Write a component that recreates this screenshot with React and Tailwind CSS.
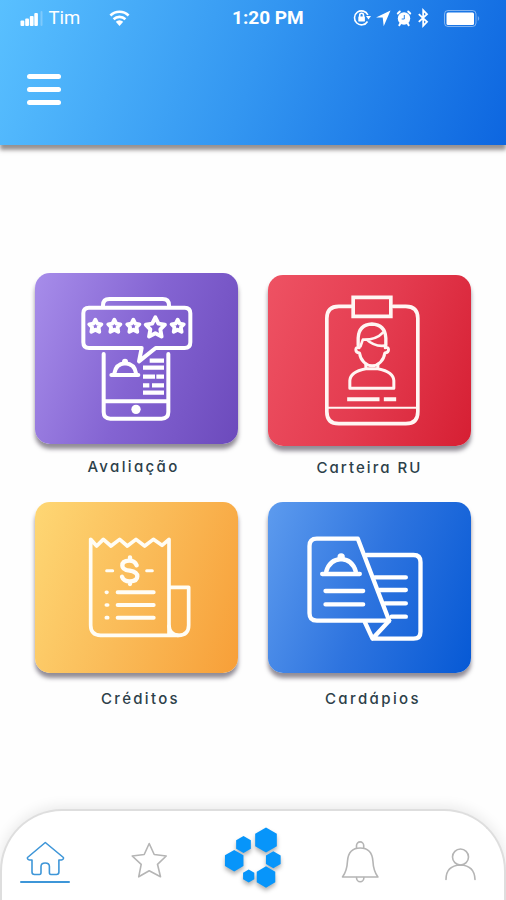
import React from "react";

/* ---------- Status bar ---------- */
const StatusBar = () => (
    <div className="relative h-9 text-white">
        <svg className="absolute inset-0 h-9 w-[506px]" viewBox="0 0 506 36" fill="currentColor">
            {/* Signal */}
            <rect x="20.5" y="20.5" width="3.8" height="5.5" rx="1" />
            <rect x="25.2" y="18.5" width="3.8" height="7.5" rx="1" />
            <rect x="29.8" y="16" width="3.8" height="10" rx="1" />
            <rect x="34.3" y="13" width="3.6" height="13" rx="1" />
            <rect x="40.5" y="11" width="2" height="15" rx="1" opacity="0.25" />
            {/* Wi-Fi */}
            <g fill="none" stroke="currentColor" strokeWidth="2.6">
                <path d="M110.4 15.5a13 13 0 0 1 18.2 0" />
                <path d="M113.6 19.3a8.4 8.4 0 0 1 11.8 0" />
            </g>
            <path d="M115.8 21.8a5.2 5.2 0 0 1 7.4 0L119.5 26z" />
            {/* Rotation lock */}
            <g fill="none" stroke="currentColor" strokeWidth="1.6">
                <path d="M367.5 21.5a7 7 0 1 1 0.4-6.5" />
                <path d="M359.7 17v-1.8a1.9 1.9 0 0 1 3.8 0V17" />
            </g>
            <rect x="358.3" y="16.5" width="6.6" height="5" rx="0.6" />
            <path d="M366 16h5l-2.5 3.6z" />
            {/* Location */}
            <path d="M390.5 10.5L376 17.4h6.7l1 8.9z" />
            {/* Alarm */}
            <circle cx="404" cy="18.5" r="6.2" />
            <path d="M397.8 13.5l2-2M410.2 13.5l-2-2M400.3 23.5l-1 1.7M407.700 23.500l1 1.700" stroke="currentColor" strokeWidth="2" strokeLinecap="round" />
            <path d="M404.300 15v4h-2.600" fill="none" stroke="#2582ea" strokeWidth="1" />
            {/* Bluetooth */}
            <path d="M418.800 14.200l8.200 7.600-3.800 4V10.300l3.800 3.900-8.200 7.600" fill="none" stroke="currentColor" strokeWidth="1.800" />
            {/* Battery */}
            <rect x="444.500" y="10.500" width="31.500" height="16" rx="3.500" fill="none" stroke="currentColor" opacity="0.450" />
            <rect x="446.500" y="12.500" width="27.500" height="12.500" rx="1.500" />
            <path d="M477.800 16v5a3 3 0 0 0 0-5z" opacity="0.400" />
        </svg>
        <span className="absolute left-[48.500px] top-[6px] font-[Roboto] text-[18.500px] leading-6">Tim</span>
        <span className="absolute left-[232px] top-[6px] whitespace-nowrap font-[Roboto] text-[19px] font-bold leading-6">
            1:20 PM
        </span>
    </div>
);

/* ---------- Card icons ---------- */
const STAR = "M0 -24L7.5 -9 23 -6.5 12 5 15 22 0 14 -15 22 -12 5 -23 -6.5 -7.5 -9z";

const ReviewIcon = () => (
    <svg className="h-full w-full" viewBox="30 39 609 513" fill="none" stroke="white" strokeWidth="12" strokeLinejoin="round" strokeLinecap="round">
        <path d="M234 140v-4q0-19 19-19h160q19 0 19 19v4" />
        <path d="M350 264H192q-17 0-17-17V160q0-17 17-17h287q17 0 17 17v87q0 17-17 17H392L342 304z" />
        <path d="M236 282v174q0 20 20 20h154q20 0 20-20V282M238 424h190" />
        <circle cx="333" cy="448" r="14" fill="white" stroke="none" />
        <g strokeWidth="14">
            <path d={STAR} transform="translate(211 198) scale(0.8)" />
            <path d={STAR} transform="translate(268 198) scale(0.8)" />
            <path d={STAR} transform="translate(325 198) scale(0.8)" />
            <path d={STAR} transform="translate(391 202) scale(1.25)" strokeWidth="9.5" />
            <path d={STAR} transform="translate(458 198) scale(0.8)" />
        </g>
        <path d="M259 345h81M268 340q5-28 32-30 29 2 33 30" />
        <circle cx="300" cy="305" r="9" fill="white" stroke="none" />
        <path strokeLinecap="butt" strokeWidth="13" d="M374 302h43M354 323h63M354 350h36M394 350h23M354 376h19M381 376h36M354 398h63" />
    </svg>
);

const BadgeIcon = () => (
    <svg className="h-full w-full" viewBox="33 44 606 513" fill="none" stroke="#fff6f3" strokeWidth="10" strokeLinejoin="round" strokeLinecap="round">
        <path strokeLinejoin="miter" strokeWidth="11" d="M287 111h113v57H287z" />
        <path strokeWidth="11" d="M282 138h-38q-36 0-36 36v280q0 36 36 36h201q36 0 36-36V174q0-36-36-36h-38" />
        <path d="M212 442h266" strokeWidth="6" />
        <path d="M302 255v-22q2-40 41-42 40 2 42 42v22" />
        <path d="M305 262q-10-2-10 6 0 8 11 10c3 23 20 38 38 38s35-15 38-38q11-2 11-10 0-8-10-6" strokeWidth="9" />
        <path d="M309 258l7-20h12c14 14 34 20 54 18M320 238c25 0 45-9 57-22" strokeWidth="8" />
        <path d="M325 312v13q-47 9-48 36v23h132v-23q-1-27-48-36v-13M328 325h32" strokeWidth="9" />
        <path strokeLinecap="butt" strokeWidth="12" d="M269 417h97M379 417h37" />
    </svg>
);

const ReceiptIcon = () => (
    <svg className="h-full w-full" viewBox="30 36 609 513" fill="none" stroke="#fffdf5" strokeWidth="11" strokeLinejoin="round" strokeLinecap="round">
        <path d="M432 434V148l-21 18-26-18-26 20-26-20-26 20-23-20-26 20-23-20-20 20-18-20v258q0 30 30 30h234q30 0 30-30V292h-55" />
        <path d="M432 408q2 26 27 28" />
        <path strokeWidth="13" d="M335 226q-6-14-22-14-21 0-21 15 0 12 22 15 23 4 23 17 0 15-23 15-18 0-23-14M315 202v9M315 275v7" />
        <path d="M245 242h18M365 242h17" strokeWidth="9" />
        <path d="M278 307h108M278 345h108M278 383h108" strokeWidth="12" />
        <path d="M244 307h2M244 345h4M244 383h4" strokeWidth="11" />
    </svg>
);

const MenuCardIcon = () => (
    <svg className="h-full w-full" viewBox="33 36 606 513" fill="none" stroke="white" strokeWidth="13" strokeLinejoin="round" strokeLinecap="round">
        <path d="M301 146H178q-22 0-22 22v202q0 22 22 22h217z" />
        <path d="M327 195h141q21 0 21 21v209q0 21-21 21H345l-23-50M345 446l50-54" />
        <path d="M194 252h113M206 245q10-36 45-38 34 2 44 38" />
        <circle cx="251" cy="201" r="11" fill="white" stroke="none" />
        <path d="M204 303h113M204 343h113M352 262h93M366 300h79M382 340h63M402 380h43" />
    </svg>
);

const cards = [
    { label: "Avaliação", icon: ReviewIcon, card: "from-[#a78dea] via-[#8464d2] to-[#6c4abc]", offset: "", text: "mt-[11px] pr-[6px] tracking-[2.35px]" },
    { label: "Carteira RU", icon: BadgeIcon, card: "from-[#ee5263] via-[#e43c50] to-[#d61f33]", offset: "mt-[2px]", text: "mt-[10px] tracking-[2.05px]" },
    { label: "Créditos", icon: ReceiptIcon, card: "from-[#fed774] via-[#fabb58] to-[#f79f38]", offset: "", text: "mt-[14px] pl-[8px] tracking-[2.3px]" },
    { label: "Cardápios", icon: MenuCardIcon, card: "from-[#5d9bee] via-[#2e74df] to-[#0659d5]", offset: "", text: "mt-[14px] pl-[7px] tracking-[2.4px]" },
];

const MenuCard = ({ item }) => {
    const Icon = item.icon;
    return (
        <div className={item.offset}>
            <div className={`h-[171px] rounded-[15px] bg-linear-[110deg] shadow-[0_5px_4px_rgba(40,30,50,0.5)] ${item.card}`}>
                <Icon />
            </div>
            <p className={`text-center font-[Inter] text-[15px] font-medium leading-6 text-[#2c4049] [font-feature-settings:'cv11'] ${item.text}`}>
                {item.label}
            </p>
        </div>
    );
};

/* ---------- Bottom navigation ---------- */
const hexagons = [
    { x: 266, y: 840, r: 12.5 },
    { x: 243.5, y: 844.5, r: 8.5 },
    { x: 234.2, y: 860.7, r: 10.7 },
    { x: 273.3, y: 859.7, r: 8.5 },
    { x: 248.7, y: 876, r: 6.5 },
    { x: 266, y: 877, r: 10.7 },
];

const hexPoints = ({ x, y, r }) =>
    [0, 1, 2, 3, 4, 5]
        .map((i) => {
            const a = (Math.PI / 3) * i - Math.PI / 2;
            return `${x + r * Math.cos(a)},${y + r * Math.sin(a)}`;
        })
        .join(" ");

const BottomNav = () => (
    <nav className="h-[91px] rounded-t-[62px] border-2 border-b-0 border-[#dedede] bg-white shadow-[0_-2px_14px_rgba(0,0,0,0.09)]">
        <svg className="-ml-[2px] -mt-[2px] h-[91px] w-[506px]" viewBox="0 809 506 91" fill="none" strokeLinejoin="round" strokeLinecap="round">
            {/* Home */}
            <g stroke="#3e96d8" strokeWidth="1.6">
                <path d="M45.3 842.500L27.500 857.500q-0.500 2 2 2.500h2.500v12q0 2.500 2.500 2.500h5q1.500 0 1.500-2v-6q0-3.500 4.200-3.500t4.200 3.500v6q0 2 1.500 2h5.500q2.500 0 2.500-2.500v-12h2.500q2.500-0.500 2-2.500z" />
                <path d="M21 882h48" strokeWidth="2" />
            </g>
            <g stroke="#b5b5b5" strokeWidth="1.6">
                {/* Favourites */}
                <path d="M149.200 843.500l5 11 12 1.500-8.700 8.300 3 12.500-11.300-6-10.500 6 2.500-12.500-9-8.300 12-1.500z" />
                {/* Notifications */}
                <path d="M342.500 877q4.500-6 5-16 1-13 12.700-13t12.700 13q0.500 10 5 16z" />
                <path d="M356.500 848v-2.500a3.600 3.600 0 0 1 7.200 0v2.500M356.500 877.500a3.700 4.300 0 0 0 7.400 0" />
                {/* Profile */}
                <circle cx="460.500" cy="857" r="8" />
                <path d="M446 879.500q0-14 14.500-14.500 14 0.500 14.500 14.500" />
            </g>
            {/* Logo */}
            <g fill="#0795fa" className="drop-shadow-[0_3px_2px_rgba(0,0,0,0.3)]">
                {hexagons.map((h) => (
                    <polygon key={`${h.x}-${h.y}`} points={hexPoints(h)} />
                ))}
            </g>
        </svg>
    </nav>
);

export default function App() {
    return (
        <div className="flex h-[900px] w-[506px] flex-col overflow-hidden bg-[#fefefe]">
            <header className="h-[145px] shrink-0 bg-linear-[110deg] from-[#59c0ff] via-[#3396f1] to-[#0d66e0] shadow-[0_5px_4px_rgba(50,40,40,0.5)]">
                <StatusBar />
                <button type="button" aria-label="Menu" className="ml-[27px] mt-[38px] flex flex-col gap-[8px]">
                    <span className="h-[5px] w-[34px] rounded-full bg-white" />
                    <span className="h-[5px] w-[34px] rounded-full bg-white" />
                    <span className="h-[5px] w-[34px] rounded-full bg-white" />
                </button>
            </header>

            <main className="grid flex-1 auto-rows-[229px] grid-cols-[203px_203px] content-start gap-x-[30px] pl-[35px] pt-[128px]">
                {cards.map((item) => (
                    <MenuCard key={item.label} item={item} />
                ))}
            </main>

            <BottomNav />
        </div>
    );
}
